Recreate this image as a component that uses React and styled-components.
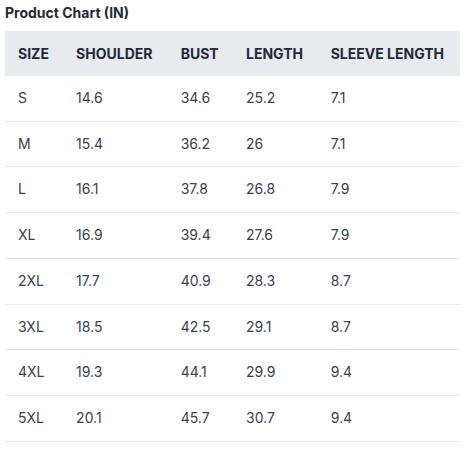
import React from "react";
import styled, { createGlobalStyle } from "styled-components";

const GlobalStyle = createGlobalStyle`
    * {
        margin: 0;
        padding: 0;
        box-sizing: border-box;
    }

    body {
        background-color: #ffffff;
        font-family: 'Inter', 'Liberation Sans', sans-serif;
        color: #1f2937;
    }
`

const Wrapper = styled.div`
    width: 467px;
    padding: 4px 7px 0 5px;
`

const Title = styled.h2`
    font-size: 14px;
    font-weight: 700;
    line-height: 18px;
    color: #1f2937;
    margin-bottom: 9px;
`

const Table = styled.table`
    width: 100%;
    border-collapse: collapse;
    font-size: 14px;
`

const HeadCell = styled.th`
    text-align: left;
    font-weight: 700;
    color: #1e293b;
    background-color: #e9eaed;
    padding: 14px 13px;
    line-height: 17px;
    white-space: nowrap;
`

const Row = styled.tr`
    border-bottom: 1px solid #e5e7eb;
`

const Cell = styled.td`
    padding: 14px 13px;
    line-height: 16.7px;
    color: #374151;
    white-space: nowrap;
`

const headers = ["SIZE", "SHOULDER", "BUST", "LENGTH", "SLEEVE LENGTH"]

const rows = [
    ["S", "14.6", "34.6", "25.2", "7.1"],
    ["M", "15.4", "36.2", "26", "7.1"],
    ["L", "16.1", "37.8", "26.8", "7.9"],
    ["XL", "16.9", "39.4", "27.6", "7.9"],
    ["2XL", "17.7", "40.9", "28.3", "8.7"],
    ["3XL", "18.5", "42.5", "29.1", "8.7"],
    ["4XL", "19.3", "44.1", "29.9", "9.4"],
    ["5XL", "20.1", "45.7", "30.7", "9.4"],
]

const App = () => {
    return (
        <React.Fragment>
            <GlobalStyle />
            <Wrapper>
                <Title>Product Chart (IN)</Title>
                <Table>
                    <thead>
                        <tr>
                            {headers.map(h => <HeadCell key={h}>{h}</HeadCell>)}
                        </tr>
                    </thead>
                    <tbody>
                        {rows.map(r => (
                            <Row key={r[0]}>
                                {r.map((v, i) => <Cell key={i}>{v}</Cell>)}
                            </Row>
                        ))}
                    </tbody>
                </Table>
            </Wrapper>
        </React.Fragment>
    )
}

export default App
